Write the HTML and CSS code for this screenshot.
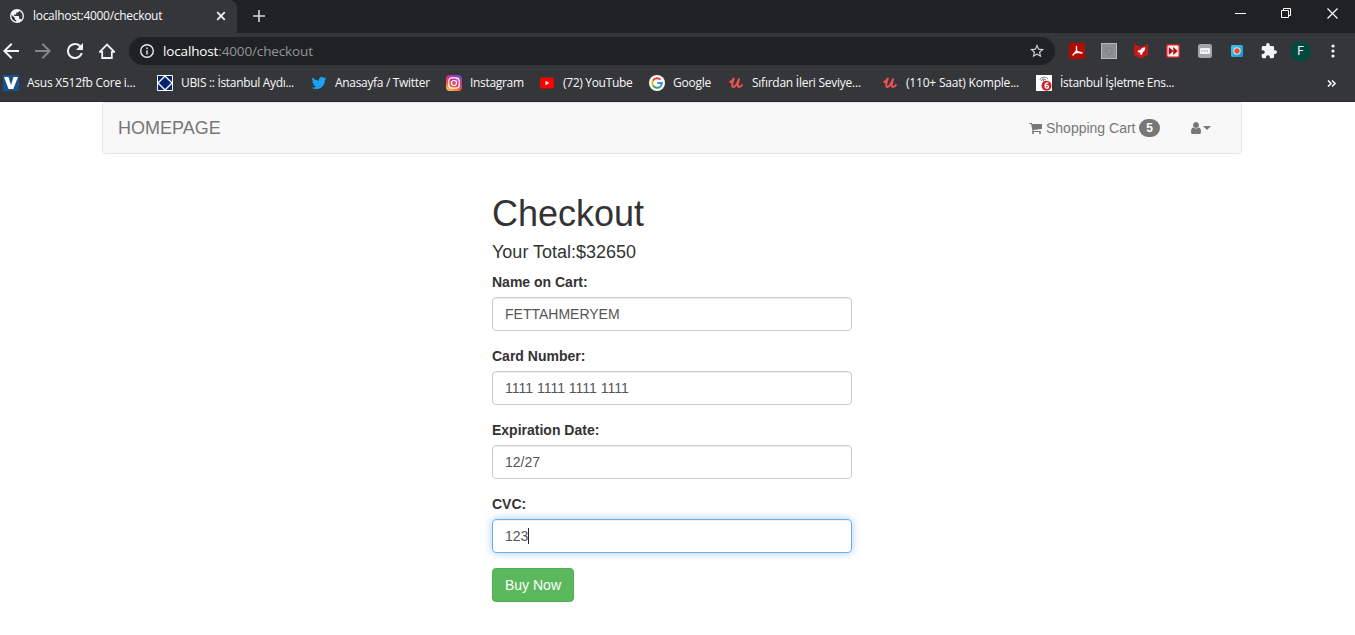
FILE: index.html
```html
<!DOCTYPE html>
<html lang="en">
<head>
<meta charset="utf-8">
<title>localhost:4000/checkout</title>
<link rel="stylesheet" href="styles.css">
</head>
<body>
<header class="browser">
  <div class="tabstrip">
    <div class="tab">
      <svg class="favicon" viewBox="2 2 20 20"><circle cx="12" cy="12" r="10" fill="#f1f3f4"/><path fill="#35363a" d="M11 19.900C7 19.400 4 16 4 12c0-.6.100-1.200.200-1.800L9 15v1c0 1.100.900 2 2 2v1.900zM17.900 17.400c-.300-.800-1-1.400-1.900-1.400h-1v-3c0-.600-.400-1-1-1H8v-2h2c.600 0 1-.400 1-1V7h2c1.100 0 2-.900 2-2v-.400A8 8 0 0 1 17.900 17.400z"/></svg>
      <span class="tab-title">localhost:4000/checkout</span>
      <svg class="tab-close" viewBox="0 0 10 10"><path d="M1.200 1.200l7.600 7.600M8.800 1.200l-7.600 7.600" stroke="#f1f3f4" stroke-width="1.800"/></svg>
    </div>
    <svg class="new-tab" viewBox="0 0 12 12"><path d="M6 0v12M0 6h12" stroke="#d5d7da" stroke-width="1.600"/></svg>
    <div class="window-buttons">
      <svg viewBox="0 0 11 11"><path d="M0 5.500h11" stroke="#fff"/></svg>
      <svg viewBox="0 0 11 11" fill="none" stroke="#fff"><path d="M.5 2.500h7v7h-7zM2.500 2.500v-2h7v7h-2"/></svg>
      <svg viewBox="0 0 11 11"><path d="M.5.5l10 10M10.500.5l-10 10" stroke="#fff" stroke-width="1.200"/></svg>
    </div>
  </div>
  <div class="toolbar">
    <div class="nav-icons">
      <svg viewBox="4 4 16 16" fill="#f1f3f4"><path d="M20 11H7.830l5.590-5.590L12 4l-8 8 8 8 1.410-1.410L7.830 13H20v-2z"/></svg>
      <svg viewBox="4 4 16 16" fill="#85868a"><path d="M12 4l-1.410 1.410L16.170 11H4v2h12.170l-5.580 5.590L12 20l8-8z"/></svg>
      <svg viewBox="4 4 16 16" fill="#f1f3f4"><path d="M17.650 6.350A7.960 7.960 0 0 0 12 4a8 8 0 1 0 7.730 10h-2.080A6 6 0 1 1 12 6c1.660 0 3.140.690 4.220 1.780L13 11h7V4l-2.350 2.350z"/></svg>
      <svg viewBox="0 0 16 16" fill="none" stroke="#f1f3f4" stroke-width="1.800"><path d="M.8 8.800 8 1.600l7.200 7.200h-2.400V15H3.200V8.800z"/></svg>
    </div>
    <div class="omnibox">
      <svg class="info" viewBox="2 2 20 20" fill="#e8eaed"><path d="M11 17h2v-6h-2v6zm1-15a10 10 0 1 0 0 20 10 10 0 0 0 0-20zm0 18a8 8 0 1 1 0-16 8 8 0 0 1 0 16zM11 9h2V7h-2v2z"/></svg>
      <span class="url"><b>localhost</b>:4000/checkout</span>
      <svg class="star" viewBox="2 2 20 20" fill="#d5d7da"><path d="M22 9.240l-7.190-.620L12 2 9.190 8.630 2 9.240l5.460 4.730L5.820 21 12 17.270 18.180 21l-1.630-7.030L22 9.240zM12 15.400l-3.760 2.270 1-4.280-3.320-2.880 4.380-.380L12 6.100l1.710 4.040 4.380.380-3.320 2.880 1 4.280L12 15.400z"/></svg>
    </div>
    <div class="extensions">
      <svg viewBox="0 0 16 16"><rect width="16" height="16" rx="2" fill="#b30b00"/><path d="M7.500 3.500v4.200L4 12M7.500 7.700c1 1.800 2.500 2.300 5.500 2.300M5.500 10.300c2-1 4-1.300 6.500-.8" fill="none" stroke="#fff" stroke-width="1.400" stroke-linecap="round"/></svg>
      <svg viewBox="0 0 16 16"><rect x=".5" y=".5" width="15" height="15" fill="#8d8f92" stroke="#b4b6b9"/><path d="M5 5h6v5L8 12l-3-2z" fill="none" stroke="#7d7f83"/></svg>
      <svg viewBox="0 0 16 16"><path d="M1 1l7 3 7-3v11l-7 3.500L1 12z" fill="#c01818"/><path d="M12 4.500C9.500 4.500 8.200 5.800 7.200 7.200L5.300 7.600 4.800 9l1.800.2.900.9.200 1.800 1.300-.5.400-1.900C11 8.300 12 7 12 4.500zM6.200 10.500l-1.500 1.500" fill="#fff" stroke="#fff" stroke-width=".3"/></svg>
      <svg viewBox="0 0 16 16"><rect x="1" y="1" width="14" height="14" rx="2" fill="#c9252f"/><rect x="2.500" y="2.500" width="11" height="11" rx="1" fill="#fff0e8"/><path d="M4 4.500v7L8 8zM8.500 4.500v7l4-3.500z" fill="#a80d1c" stroke="#a80d1c" stroke-width=".5"/></svg>
      <svg viewBox="0 0 16 16"><rect x="1" y="1" width="14" height="14" rx="2.500" fill="#a3a5a8"/><rect x="3" y="5" width="10" height="6" rx="1" fill="#f1f3f4"/><path d="M4.500 8h7" stroke="#999" stroke-dasharray="1.500 1"/></svg>
      <svg viewBox="0 0 16 16"><defs><linearGradient id="sky" x2="1" y2="1"><stop stop-color="#41c7f4"/><stop offset="1" stop-color="#1493d1"/></linearGradient></defs><rect x="2" y="2" width="12" height="12" rx="1.500" fill="url(#sky)"/><circle cx="8" cy="8" r="3.200" fill="#ed4b32" stroke="#d5eefa" stroke-width="1.100"/></svg>
      <svg viewBox="1 1 22 22" fill="#f1f3f4"><path d="M20.500 11H19V7c0-1.100-.9-2-2-2h-4V3.500a2.500 2.500 0 0 0-5 0V5H4a2 2 0 0 0-2 2v3.800h1.500a2.700 2.700 0 0 1 0 5.400H2V20c0 1.100.9 2 2 2h3.800v-1.500a2.700 2.700 0 0 1 5.400 0V22H17a2 2 0 0 0 2-2v-4h1.500a2.500 2.500 0 0 0 0-5z"/></svg>
    </div>
    <span class="avatar">F</span>
    <svg class="menu" viewBox="0 0 4 14" fill="#f1f3f4"><circle cx="2" cy="2" r="1.600"/><circle cx="2" cy="7" r="1.600"/><circle cx="2" cy="12" r="1.600"/></svg>
  </div>
  <nav class="bookmarks">
    <div class="bookmark long">
      <svg viewBox="0 0 16 16"><path fill="#175391" d="M0 0h16v16H0z"/><path d="M1 2h4.500L8 10l2.500-8H15l-4.700 12H5.500z" fill="#fff"/></svg>
      <span>Asus X512fb Core i...</span>
    </div>
    <div class="bookmark long snug">
      <svg viewBox="0 0 16 16"><path fill="#06256e" stroke="#fff" d="M.5.5h15v15H.5z"/><path fill="#06256e" stroke="#fff" stroke-width="1.300" d="M8 1l7 7-7 7-7-7z"/></svg>
      <span>UBIS :: İstanbul Aydı...</span>
    </div>
    <div class="bookmark twitter snug">
      <svg viewBox="-1 -1 26 26" fill="#1da1f2"><path d="M23.950 4.570a10 10 0 0 1-2.820.770 4.960 4.960 0 0 0 2.160-2.720c-.950.550-2 .950-3.130 1.180a4.920 4.920 0 0 0-8.380 4.480C7.690 8.090 4.070 6.130 1.640 3.160a4.920 4.920 0 0 0 1.520 6.570 4.900 4.900 0 0 1-2.230-.610v.060a4.920 4.920 0 0 0 3.950 4.830 5 5 0 0 1-2.210.080 4.940 4.940 0 0 0 4.600 3.420A9.870 9.870 0 0 1 0 19.540a14 14 0 0 0 7.550 2.210c9.050 0 14-7.500 14-13.980v-.640a10 10 0 0 0 2.400-2.560z"/></svg>
      <span>Anasayfa / Twitter</span>
    </div>
    <div class="bookmark instagram snug">
      <svg viewBox="0 0 16 16"><defs><linearGradient id="ig" x1=".2" y1="1" x2=".7" y2="0"><stop stop-color="#fdc655"/><stop offset=".35" stop-color="#f0583e"/><stop offset=".65" stop-color="#cf318d"/><stop offset="1" stop-color="#754bc0"/></linearGradient></defs><rect width="16" height="16" rx="4" fill="url(#ig)"/><g fill="none" stroke="#fff" stroke-width="1.200"><rect x="2.800" y="2.800" width="10.400" height="10.400" rx="3"/><circle cx="8" cy="8" r="2.500"/></g><circle cx="11" cy="5" r=".7" fill="#fff"/></svg>
      <span>Instagram</span>
    </div>
    <div class="bookmark youtube snug">
      <svg viewBox="0 0 16 16"><rect x="1" y="2.500" width="14" height="11" rx="2" fill="#f00"/><path d="M6.500 5.800v4.400L10.300 8z" fill="#fff"/></svg>
      <span>(72) YouTube</span>
    </div>
    <div class="bookmark google">
      <svg viewBox="0 0 16 16" fill="none" stroke-width="2"><circle cx="8" cy="8" r="8" fill="#fff"/><path stroke="#ea4335" d="M3.900 5.700A4.800 4.800 0 0 1 11.500 4.600"/><path stroke="#fbbc05" d="M4 10.500a4.800 4.800 0 0 1-.1-4.800"/><path stroke="#34a853" d="M4 10.500a4.800 4.800 0 0 0 7.200 1.200"/><path stroke="#4285f4" d="M11.200 11.700A4.800 4.800 0 0 0 12.800 8H8.200"/></svg>
      <span>Google</span>
    </div>
    <div class="bookmark long">
      <svg viewBox="0 0 16 16"><path d="M1.500 7.500C3.500 6.500 5 5 5.800 3.500 4.500 7 3.300 12 5.300 12S9.500 8 11 4.200C9.500 8.500 9.300 12 11 12s2.600-1.300 3.500-2.500" fill="none" stroke="#ec5252" stroke-width="2" stroke-linejoin="round"/></svg>
      <span>Sıfırdan İleri Seviye...</span>
    </div>
    <div class="bookmark long loose">
      <svg viewBox="0 0 16 16"><path d="M1.500 7.500C3.500 6.500 5 5 5.800 3.500 4.500 7 3.300 12 5.300 12S9.500 8 11 4.200C9.500 8.500 9.300 12 11 12s2.600-1.300 3.500-2.500" fill="none" stroke="#ec5252" stroke-width="2" stroke-linejoin="round"/></svg>
      <span>(110+ Saat) Komple...</span>
    </div>
    <div class="bookmark long snug">
      <svg viewBox="0 0 16 16"><path fill="#fff" d="M0 0h16v16H0z"/><path d="M4 5c0-3 7-4 8-1M5 6c1-2 4-2 5-1M7 3l1 5" fill="none" stroke="#888"/><circle cx="10.500" cy="10.800" r="5" fill="#d22027"/><path d="M12.300 8c-2-.5-3.200 1-3.200 3.200 0 2.800 3.300 2.600 3.300.5 0-1.700-2.300-1.800-3.100-.4" fill="none" stroke="#fff" stroke-width="1.400"/></svg>
      <span>İstanbul İşletme Ens...</span>
    </div>
    <svg class="overflow" viewBox="0 0 9 7" fill="none" stroke="#f1f3f4" stroke-width="1.600"><path d="M1 .5l3 3-3 3M5 .5l3 3-3 3"/></svg>
  </nav>
</header>
<main class="container">
  <nav class="navbar">
    <a class="brand">HOMEPAGE</a>
    <a class="cart">
      <svg viewBox="0 128 1664 1536" fill="currentColor"><path d="M640 1536q0 52-38 90t-90 38-90-38-38-90 38-90 90-38 90 38 38 90zm896 0q0 52-38 90t-90 38-90-38-38-90 38-90 90-38 90 38 38 90zm128-1088v512q0 24-16.500 42.500t-40.500 21.500l-1044 122q13 60 13 70 0 16-24 64h920q26 0 45 19t19 45-19 45-45 19h-1024q-26 0-45-19t-19-45q0-11 8-31.500t16-36 21.500-40 15.500-29.500l-177-823h-204q-26 0-45-19t-19-45 19-45 45-19h256q16 0 28.500 6.500t19.500 15.500 13 24.500 8 26 5.500 29.500 4.500 26h1201q26 0 45 19t19 45z"/></svg>
      <span>Shopping Cart</span>
      <span class="badge">5</span>
    </a>
    <a class="account">
      <svg viewBox="256 128 1280 1536" fill="currentColor"><path d="M1536 1399q0 109-62.500 187t-150.500 78h-854q-88 0-150.500-78t-62.500-187q0-85 8.500-160.500t31.500-152 58.500-131 94-89 134.500-34.500q131 128 313 128t313-128q76 0 134.500 34.500t94 89 58.500 131 31.500 152 8.500 160.500zm-256-887q0 159-112.500 271.500t-271.500 112.500-271.500-112.500-112.500-271.500 112.500-271.500 271.500-112.500 271.500 112.500 112.500 271.500z"/></svg>
      <span class="caret"></span>
    </a>
  </nav>
  <form class="checkout">
    <h1>Checkout</h1>
    <h4>Your Total:$32650</h4>
    <div class="group"><label>Name on Cart:</label><div class="control">FETTAHMERYEM</div></div>
    <div class="group"><label>Card Number:</label><div class="control">1111 1111 1111 1111</div></div>
    <div class="group"><label>Expiration Date:</label><div class="control">12/27</div></div>
    <div class="group"><label>CVC:</label><div class="control focused">123<span class="cursor"></span></div></div>
    <button class="buy" type="button">Buy Now</button>
  </form>
</main>
</body>
</html>
```
FILE: styles.css
```css
* { box-sizing: border-box; }
body { margin: 0; background: #fff; overflow: hidden; font: 14px/20px "Liberation Sans", Arial, sans-serif; color: #333; }
svg { display: block; flex: none; }
.browser { height: 102px; background: #35363a; border-bottom: 1px solid #29292c; color: #f8f9fa; font-family: "Open Sans", "Noto Sans", sans-serif; white-space: nowrap; }
.tabstrip { display: flex; align-items: center; height: 33px; background: #202124; }
.tab { display: flex; align-items: center; width: 237px; height: 33px; padding: 0 11px 1px 10px; background: #35363a; border-top-right-radius: 8px; }
.favicon { width: 14px; height: 14px; margin-right: 9px; }
.tab-title { flex: 1; font-size: 12px; letter-spacing: -0.3px; }
.tab-close { width: 10px; height: 10px; }
.new-tab { width: 12px; height: 12px; margin: 0 0 1px 16px; }
.window-buttons { display: flex; gap: 35px; margin: 0 17px 7px auto; }
.window-buttons svg { width: 11px; height: 11px; }
.toolbar { display: flex; align-items: center; height: 36px; padding: 0 20px 0 3px; }
.nav-icons { display: flex; gap: 16px; width: 126px; }
.nav-icons svg { width: 16px; height: 16px; }
.omnibox { display: flex; align-items: center; width: 926px; height: 28px; padding: 0 11px; border-radius: 14px; background: #202124; }
.info { width: 14px; height: 14px; margin-right: 9px; }
.url { flex: 1; color: #93969a; font-size: 13.5px; letter-spacing: -0.14px; }
.url b { font-weight: 400; color: #fff; }
.star { width: 14px; height: 14px; }
.extensions { display: flex; gap: 16px; margin-left: 14px; }
.extensions svg { width: 16px; height: 16px; }
.avatar { width: 21px; height: 21px; margin-left: 13px; border-radius: 50%; background: #04493f; font: 12px/21px Roboto, sans-serif; text-align: center; }
.menu { width: 4px; height: 14px; margin-left: auto; }
.bookmarks { display: flex; align-items: center; height: 28px; padding-left: 3px; font-size: 12px; letter-spacing: -0.25px; }
.bookmark { display: flex; align-items: center; gap: 8px; flex: none; }
.bookmark svg { width: 16px; height: 16px; }
.snug { letter-spacing: -0.32px; }
.loose { letter-spacing: -0.2px; }
.long { width: 154px; }
.twitter { width: 135px; }
.instagram { width: 93px; }
.youtube { width: 110px; }
.google { width: 79px; }
.overflow { width: 9px; height: 7px; margin: 0 19px 0 auto; }
.container { width: 1140px; margin-left: 102px; }
.navbar { display: flex; align-items: center; height: 52px; padding: 0 30px 0 15px; border: 1px solid #e7e7e7; border-radius: 4px; background: #f8f8f8; color: #777; }
.brand { margin-right: auto; font-size: 18px; }
.cart { display: flex; align-items: center; gap: 3.5px; }
.cart svg { width: 13px; height: 12px; }
.badge { min-width: 21px; height: 18px; border-radius: 10px; background: #777; color: #fff; font: bold 12px/18px "Liberation Sans", sans-serif; text-align: center; }
.account { display: flex; align-items: center; gap: 1px; margin-left: 30px; }
.account svg { width: 12px; height: 12px; }
.caret { border-top: 4px solid; border-left: 4px solid transparent; border-right: 4px solid transparent; }
.checkout { width: 360px; margin: 40px 0 0 390px; }
h1, h4 { margin: 0 0 10px; font-weight: 400; }
h1 { font-size: 36px; line-height: 39px; }
h4 { font-size: 18px; line-height: 19px; }
.group { margin-bottom: 15px; }
label { display: block; margin-bottom: 5px; font-weight: 700; }
.control { display: flex; align-items: center; height: 34px; padding: 0 12px; border: 1px solid #ccc; border-radius: 4px; color: #555; box-shadow: inset 0 1px 1px rgba(0,0,0,.075); }
.focused { border-color: #66afe9; box-shadow: inset 0 1px 1px rgba(0,0,0,.075), 0 0 8px rgba(102,175,233,.6); }
.cursor { width: 1px; height: 16px; background: #222; }
.buy { display: block; width: 82px; height: 34px; padding: 0; border: 1px solid #4cae4c; border-radius: 4px; background: #5cb85c; color: #fff; font: 14px/20px "Liberation Sans", sans-serif; }
```
